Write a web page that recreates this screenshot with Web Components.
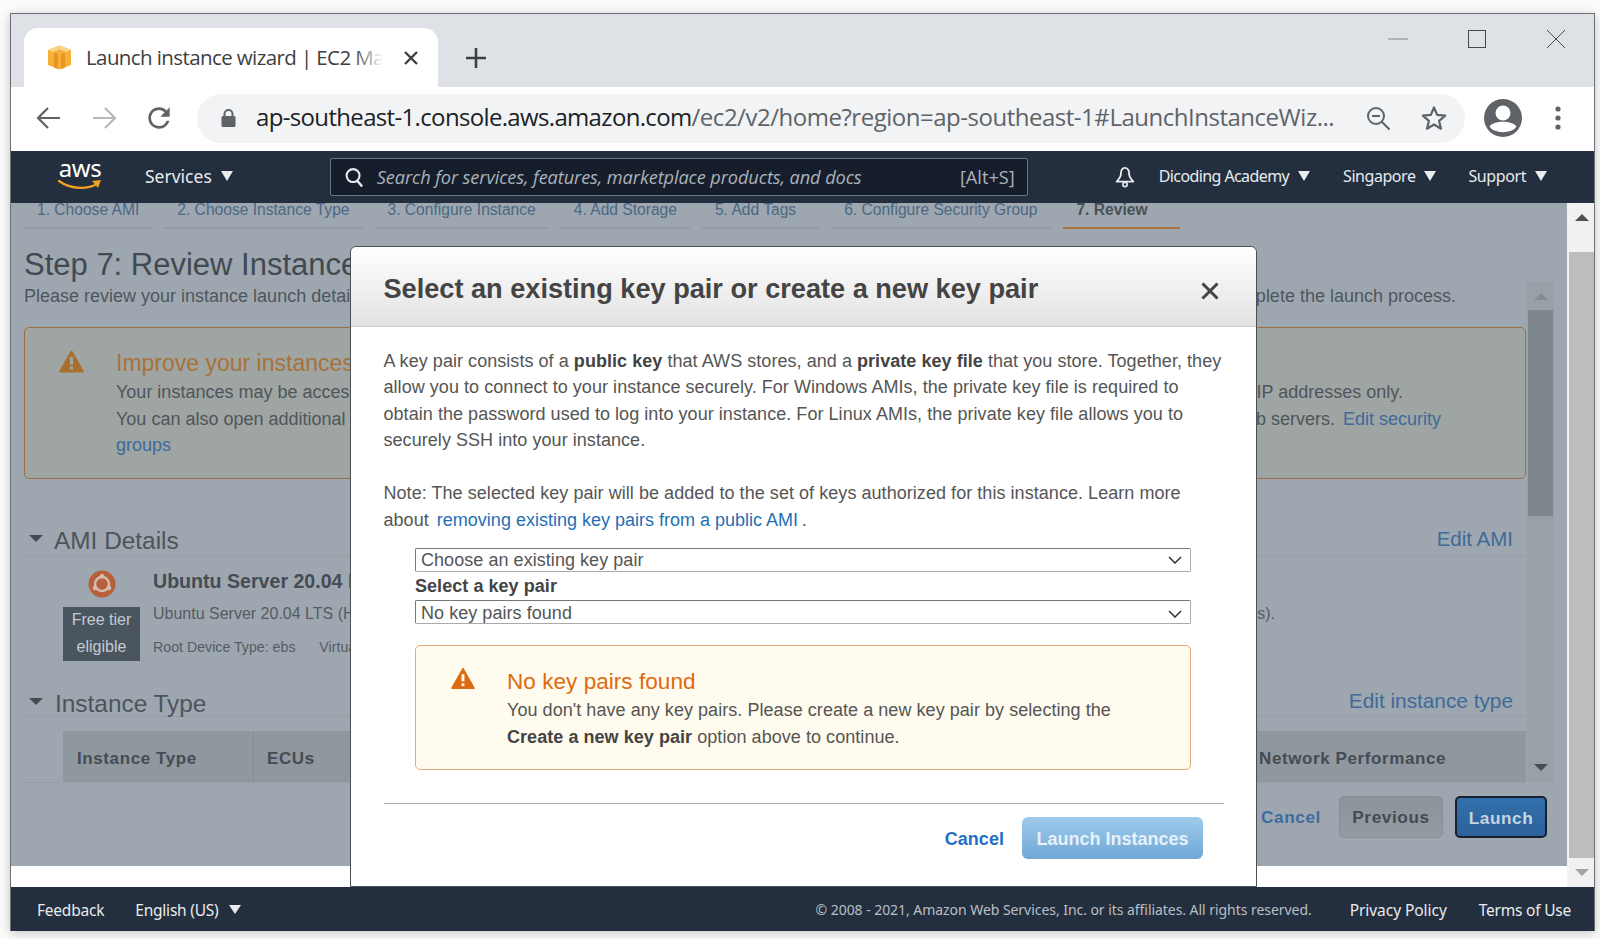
<!DOCTYPE html>
<html lang="en">
<head>
<meta charset="utf-8">
<title>Launch instance wizard</title>
<style>
html, body { margin: 0; height: 100%; background: #fbfbfb; overflow: hidden; }
body { padding: 13px 5px 0 10px; box-sizing: border-box; font-family: "Liberation Sans", Arial, sans-serif; }
</style>
</head>
<body>
<browser-window>
    <chrome-tabs></chrome-tabs>
    <chrome-toolbar></chrome-toolbar>
    <aws-nav></aws-nav>
    <console-body>
        <review-page></review-page>
        <page-scrollbar></page-scrollbar>
    </console-body>
    <aws-footer></aws-footer>
    <key-modal></key-modal>
</browser-window>

<script>
const warnIcon = (w, h, fill, mark) => `
    <svg width="${w}" height="${h}" viewBox="0 0 25 23">
        <path d="M12.5 1.5 L23.8 21.5 H1.2 Z" fill="${fill}" stroke="${fill}" stroke-width="2" stroke-linejoin="round"/>
        <rect x="11" y="7" width="3" height="7.5" fill="${mark}"/>
        <rect x="11" y="16.5" width="3" height="3" fill="${mark}"/>
    </svg>`;

// left and right pieces of a line that runs behind the modal
const clipCss = `
    .split { display: flex; justify-content: space-between; white-space: nowrap; }
    .lclip { display: block; overflow: hidden; white-space: nowrap; flex: none; }
    .rclip { display: flex; justify-content: flex-end; overflow: hidden; white-space: pre; flex: none; }
    .rclip > span { flex: none; }
`;

function define(name, html) {
    const template = document.createElement('template');
    template.innerHTML = html;
    customElements.define(name, class extends HTMLElement {
        constructor() {
            super();
            this.attachShadow({ mode: 'open' });
            this.shadowRoot.appendChild(template.content.cloneNode(true));
        }
    });
}

define('browser-window', `
    <style>
    :host {
        display: flex;
        flex-direction: column;
        position: relative;
        width: 1585px;
        height: 918px;
        box-sizing: border-box;
        border: 1px solid #6d7175;
        border-bottom: 0;
        box-shadow: 0 2px 10px rgba(0,0,0,.22);
    }
    </style>
    <slot></slot>
`);

define('chrome-tabs', `
    <style>
    :host {
        display: flex;
        align-items: flex-end;
        height: 73px;
        flex: none;
        background: #dee1e6;
        padding-left: 13px;
        font-family: "Open Sans", sans-serif;
    }
    .tab {
        position: relative;
        display: flex;
        align-items: center;
        width: 414px;
        height: 59px;
        box-sizing: border-box;
        padding: 0 0 0 23px;
        background: #fff;
        border-radius: 14px 14px 0 0;
    }
    .tab::after {
        content: "";
        position: absolute;
        right: 55px;
        top: 10px;
        width: 30px;
        height: 40px;
        background: linear-gradient(to right, rgba(255,255,255,0), #fff);
    }
    .title {
        width: 297px;
        margin: 0 0 2px 14px;
        font-size: 20.5px;
        letter-spacing: -0.6px;
        color: #3c4043;
        white-space: nowrap;
        overflow: hidden;
    }
    .close { margin-left: 21px; }
    .plus { margin: 0 0 18px 27px; }
    .controls { display: flex; align-items: center; margin: 0 28px 38px auto; gap: 59px; }
    </style>
    <div class="tab">
        <svg width="25" height="25" viewBox="0 0 25 25">
            <path d="M12.5 0.5 L24 5 V20 L12.5 24.5 L1 20 V5 Z" fill="#f4b03a"/>
            <path d="M12.5 0.5 L24 5 L19 7 L12.5 4.5 L6 7 L1 5 Z" fill="#fbd27d"/>
            <path d="M7 7.5 L11 9 V24 L7 22.5 Z M14 9 L18 7.5 V22.5 L14 24 Z" fill="#e8961f"/>
        </svg>
        <span class="title">Launch instance wizard | EC2 Management Console</span>
        <svg class="close" width="14" height="14" viewBox="0 0 14 14">
            <path d="M1 1 L13 13 M13 1 L1 13" stroke="#3c4043" stroke-width="2.4"/>
        </svg>
    </div>
    <svg class="plus" width="22" height="22" viewBox="0 0 22 22">
        <path d="M11 1 V21 M1 11 H21" stroke="#3c4043" stroke-width="2.6"/>
    </svg>
    <div class="controls">
        <svg width="20" height="20" viewBox="0 0 20 20"><path d="M0 10 H20" stroke="#85888c" stroke-width="1"/></svg>
        <svg width="20" height="20" viewBox="0 0 20 20"><rect x="1.5" y="1.5" width="17" height="17" fill="none" stroke="#45484c" stroke-width="1"/></svg>
        <svg width="20" height="20" viewBox="0 0 20 20"><path d="M1 1 L19 19 M19 1 L1 19" stroke="#45484c" stroke-width="1"/></svg>
    </div>
`);

define('chrome-toolbar', `
    <style>
    :host {
        display: flex;
        align-items: center;
        height: 64px;
        box-sizing: border-box;
        padding: 0 0 2px 25px;
        flex: none;
        background: #fff;
        font-family: "Open Sans", sans-serif;
    }
    svg { flex: none; }
    .back { margin-right: 33px; }
    .forward { margin-right: 26px; }
    .omni {
        display: flex;
        align-items: center;
        width: 1268px;
        height: 49px;
        margin-left: 22px;
        padding-left: 24px;
        box-sizing: border-box;
        background: #f1f3f4;
        border-radius: 25px;
    }
    .url {
        width: 1082px;
        margin: 0 0 3px 20px;
        font-size: 24px;
        letter-spacing: -0.48px;
        color: #5f6368;
        white-space: nowrap;
    }
    .url b { font-weight: 400; letter-spacing: -0.66px; color: #202124; }
    .zoom { margin-left: 28px; }
    .star { margin-left: 30px; }
    .avatar { margin-left: 19px; }
    .dots { margin-left: 33px; }
    </style>
    <svg class="back" width="24" height="24" viewBox="0 0 24 24"><path d="M24 12 H2 M12 2 L2 12 L12 22" fill="none" stroke="#5f6368" stroke-width="2.2"/></svg>
    <svg class="forward" width="24" height="24" viewBox="0 0 24 24"><path d="M0 12 H22 M12 2 L22 12 L12 22" fill="none" stroke="#b5b8bc" stroke-width="2.2"/></svg>
    <svg width="32" height="32" viewBox="0 0 24 24"><path fill="#5f6368" d="M17.65 6.35A7.95 7.95 0 0 0 12 4c-4.42 0-7.99 3.58-7.99 8s3.57 8 7.99 8c3.73 0 6.84-2.55 7.73-6h-2.08A5.99 5.99 0 0 1 12 18c-3.31 0-6-2.69-6-6s2.69-6 6-6c1.66 0 3.14.69 4.22 1.78L13 11h7V4l-2.35 2.35z"/></svg>
    <div class="omni">
        <svg width="15" height="20" viewBox="0 0 15 20">
            <path d="M3.5 8 V6 a4 4 0 0 1 8 0 V8" fill="none" stroke="#5f6368" stroke-width="2"/>
            <rect x="0.5" y="8" width="14" height="11" rx="1.5" fill="#5f6368"/>
        </svg>
        <div class="url"><b>ap-southeast-1.console.aws.amazon.com</b>/ec2/v2/home?region=ap-southeast-1#LaunchInstanceWiz...</div>
        <svg class="zoom" width="25" height="25" viewBox="0 0 25 25">
            <circle cx="10" cy="10" r="8" fill="none" stroke="#5f6368" stroke-width="2"/>
            <path d="M6 10 H14 M16 16 L23.5 23.5" stroke="#5f6368" stroke-width="2"/>
        </svg>
        <svg class="star" width="26" height="26" viewBox="0 0 26 26">
            <path d="M13 2.5 L16.2 9.9 L24.2 10.6 L18.1 15.9 L20 23.7 L13 19.5 L6 23.7 L7.9 15.9 L1.8 10.6 L9.8 9.9 Z" fill="none" stroke="#5f6368" stroke-width="2.2" stroke-linejoin="round"/>
        </svg>
    </div>
    <svg class="avatar" width="38" height="38" viewBox="0 0 38 38">
        <circle cx="19" cy="19" r="19" fill="#5f6368"/>
        <circle cx="19" cy="14" r="7.5" fill="#fff"/>
        <path d="M5.5 27.5 C9 21 29 21 32.5 27.5 C28 35 10 35 5.5 27.5 Z" fill="#fff"/>
    </svg>
    <svg class="dots" width="6" height="24" viewBox="0 0 6 24">
        <circle cx="3" cy="3" r="2.6" fill="#5f6368"/><circle cx="3" cy="12" r="2.6" fill="#5f6368"/><circle cx="3" cy="21" r="2.6" fill="#5f6368"/>
    </svg>
`);

define('aws-nav', `
    <style>
    :host {
        display: flex;
        align-items: center;
        height: 52px;
        flex: none;
        background: #232f3e;
        padding-left: 47px;
        font-family: "Noto Sans", sans-serif;
        font-size: 16px;
        color: #e9ebed;
    }
    .logo { position: relative; width: 44px; height: 40px; }
    .logo span {
        display: block;
        font-size: 24px;
        line-height: 22px;
        text-align: center;
        color: #fff;
        letter-spacing: -0.5px;
    }
    .logo svg { display: block; margin-top: -1px; }
    .item { display: flex; align-items: center; white-space: nowrap; padding-bottom: 2px; }
    .tri { width: 0; height: 0; border: 6.5px solid transparent; border-top: 10px solid #e9ebed; border-bottom: 0; margin-left: 9px; }
    .services { margin-left: 43px; font-size: 17.5px; }
    .search {
        display: flex;
        align-items: center;
        width: 698px;
        height: 38px;
        box-sizing: border-box;
        margin-left: 97px;
        padding: 0 12px 0 14px;
        background: #161e2c;
        border: 1px solid #6c7781;
        border-radius: 2px;
        color: #aab2ba;
        font-size: 18.2px;
        font-family: "Open Sans", sans-serif;
    }
    .search i { margin-left: 13px; white-space: nowrap; letter-spacing: -0.1px; }
    .search span { margin-left: auto; }
    .bell { margin-left: 87px; }
    .acct { margin-left: 24px; letter-spacing: -0.6px; }
    .region { margin-left: 33px; letter-spacing: -0.45px; }
    .support { margin-left: 32px; letter-spacing: -0.4px; }
    </style>
    <div class="logo">
        <span>aws</span>
        <svg width="44" height="14" viewBox="0 0 44 14">
            <path d="M1 3 C12 11 28 12 39 6" fill="none" stroke="#f0a020" stroke-width="2.4" stroke-linecap="round"/>
            <path d="M34 3 L43 2 L40 10 Z" fill="#f0a020"/>
        </svg>
    </div>
    <div class="item services">Services<span class="tri"></span></div>
    <div class="search">
        <svg width="19" height="21" viewBox="0 0 20 22">
            <circle cx="8.5" cy="9" r="6.8" fill="none" stroke="#e9ebed" stroke-width="2.2"/>
            <path d="M13 14.5 L18 20.5" stroke="#e9ebed" stroke-width="2.6"/>
        </svg>
        <i>Search for services, features, marketplace products, and docs</i>
        <span>[Alt+S]</span>
    </div>
    <svg class="bell" width="20" height="24" viewBox="0 0 24 26">
        <path d="M12 2 C8 2 7 6 7 10 C7 13 5 15 2 18.5 H22 C19 15 17 13 17 10 C17 6 16 2 12 2 Z" fill="none" stroke="#e9ebed" stroke-width="2.2" stroke-linejoin="round"/>
        <circle cx="12" cy="22" r="2.6" fill="none" stroke="#e9ebed" stroke-width="2"/>
    </svg>
    <div class="item acct">Dicoding Academy<span class="tri"></span></div>
    <div class="item region">Singapore<span class="tri"></span></div>
    <div class="item support">Support<span class="tri"></span></div>
`);

define('console-body', `
    <style>
    :host { display: flex; flex: 1; min-height: 0; background: #fff; }
    </style>
    <slot></slot>
`);

define('wizard-steps', `
    <style>
    :host {
        display: flex;
        gap: 12px;
        height: 26px;
        font-size: 15.6px;
        color: #4b6785;
    }
    span {
        padding: 0 13px;
        line-height: 13px;
        border-bottom: 2px solid #949ca4;
        white-space: nowrap;
    }
    .five { padding-right: 23px; }
    .six { padding-right: 14px; }
    .on { color: #4a5058; font-weight: 700; border-bottom-color: #a8763a; padding-right: 32px; }
    </style>
    <span>1. Choose AMI</span>
    <span>2. Choose Instance Type</span>
    <span>3. Configure Instance</span>
    <span>4. Add Storage</span>
    <span class="five">5. Add Tags</span>
    <span class="six">6. Configure Security Group</span>
    <span class="on">7. Review</span>
`);

define('warn-box', `
    <style>
    ${clipCss}
    :host {
        display: flex;
        box-sizing: border-box;
        height: 152px;
        margin-top: 19px;
        padding: 20px 0 0 34px;
        background: #9fa5a3;
        border: 1px solid #9b6f42;
        border-radius: 5px;
        color: #4f555b;
    }
    .icon { flex: none; width: 57px; padding-top: 2px; }
    .text { flex: 1; min-width: 0; line-height: 26.5px; }
    h2 { margin: 0 0 1px; width: 234px; overflow: hidden; font-size: 23px; font-weight: 400; line-height: 30px; color: #a8723a; white-space: nowrap; }
    .lclip { width: 234px; }
    a { color: #3e6a9c; }
    .gap { margin-left: 3px; }
    </style>
    <div class="icon">${warnIcon(25, 23, '#a8702f', '#a0a6a4')}</div>
    <div class="text">
        <h2>Improve your instances'</h2>
        <div class="split" style="padding-right:122px"><span class="lclip">Your instances may be accessible</span><span class="rclip" style="width:147px"><span>known IP addresses only.</span></span></div>
        <div class="split" style="padding-right:84px"><span class="lclip">You can also open additional ports</span><span class="rclip" style="width:185px"><span>for web servers. <a class="gap">Edit security</a></span></span></div>
        <div><a>groups</a></div>
    </div>
`);

define('section-head', `
    <style>
    :host {
        display: flex;
        align-items: center;
        height: 36px;
        box-sizing: border-box;
        padding-top: var(--drop, 2px);
        border-bottom: 1px solid #959da5;
        color: #4d545b;
        padding-right: 13px;
    }
    .tri { width: 0; height: 0; border: 7px solid transparent; border-top: 7px solid #444b52; border-bottom: 0; margin: 0 11px 0 5px; }
    h3 { margin: 0; padding-top: var(--title-drop, 4px); font-size: 24.4px; font-weight: 400; white-space: nowrap; }
    ::slotted(a) { margin-left: auto; font-size: var(--link-size, 20.5px); color: #3f6a99; white-space: nowrap; }
    </style>
    <span class="tri"></span>
    <h3><slot name="title"></slot></h3>
    <slot></slot>
`);

define('ami-row', `
    <style>
    ${clipCss}
    :host { display: flex; height: 125px; padding: 14px 0 0 39px; box-sizing: border-box; color: #555c63; }
    .left { flex: none; width: 77px; margin-right: 13px; text-align: center; }
    .left svg { display: block; margin: 0 auto 9px; }
    .free {
        background: #4b555f;
        color: #c3cbd2;
        font-size: 16px;
        line-height: 26.5px;
        height: 54px;
    }
    .info { flex: 1; min-width: 0; }
    .name { width: 198px; overflow: hidden; margin-top: -2px; font-size: 19.6px; font-weight: 700; line-height: 26px; color: #454c54; white-space: nowrap; }
    .split { font-size: 16px; line-height: 26px; margin-top: 7px; padding-right: 251px; }
    .lclip { width: 198px; }
    .meta { width: 198px; overflow: hidden; font-size: 14.2px; line-height: 26px; margin-top: 7px; white-space: nowrap; }
    .meta span { margin-left: 16px; }
    </style>
    <div class="left">
        <svg width="28" height="28" viewBox="0 0 28 28">
            <circle cx="14" cy="14" r="13.5" fill="#b8603c"/>
            <circle cx="14" cy="14" r="7" fill="none" stroke="#d3bdb2" stroke-width="2.4"/>
            <circle cx="14" cy="6" r="2.2" fill="#d3bdb2"/><circle cx="7" cy="18" r="2.2" fill="#d3bdb2"/><circle cx="21" cy="18" r="2.2" fill="#d3bdb2"/>
        </svg>
        <div class="free">Free tier<br>eligible</div>
    </div>
    <div class="info">
        <div class="name">Ubuntu Server 20.04 LTS</div>
        <div class="split"><span class="lclip">Ubuntu Server 20.04 LTS (HVM)</span><span class="rclip" style="width:19px"><span>s).</span></span></div>
        <div class="meta">Root Device Type: ebs<span>&nbsp;&nbsp;Virtualization type</span></div>
    </div>
`);

define('table-head', `
    <style>
    :host {
        display: block;
        margin-top: 14px;
        padding-left: 39px;
        border-bottom: 1px solid #959da5;
    }
    .row {
        display: flex;
        height: 51px;
        background: #8f979f;
        color: #454c53;
        font-size: 17px;
        font-weight: 700;
        letter-spacing: .6px;
        line-height: 55px;
        white-space: nowrap;
    }
    .a { width: 191px; box-sizing: border-box; padding-left: 14px; border-right: 1px solid #858d95; }
    .b { padding-left: 13px; }
    .c { margin-left: auto; width: 267px; }
    </style>
    <div class="row">
        <div class="a">Instance Type</div>
        <div class="b">ECUs</div>
        <div class="c">Network Performance</div>
    </div>
`);

define('inner-scrollbar', `
    <style>
    :host {
        display: flex;
        flex-direction: column;
        align-items: center;
        flex: none;
        width: 27px;
        margin-left: 1px;
        background: #99a1a8;
    }
    .up { height: 28px; display: flex; align-items: center; }
    .thumb { width: 25px; height: 206px; background: #7f878e; }
    .down { margin-top: auto; height: 30px; display: flex; align-items: center; }
    .u { width: 0; height: 0; border: 7px solid transparent; border-bottom: 7px solid #848c94; border-top: 0; }
    .d { width: 0; height: 0; border: 7px solid transparent; border-top: 7px solid #474e55; border-bottom: 0; }
    </style>
    <div class="up"><span class="u"></span></div>
    <div class="thumb"></div>
    <div class="down"><span class="d"></span></div>
`);

define('dim-buttons', `
    <style>
    :host {
        display: flex;
        align-items: center;
        justify-content: flex-end;
        margin-top: 14px;
        padding-right: 20px;
        height: 42px;
        font-size: 17.2px;
        font-weight: 700;
        letter-spacing: .6px;
    }
    a { color: #3e6c9f; margin-right: 18px; }
    div { box-sizing: border-box; height: 42px; line-height: 40px; text-align: center; border-radius: 5px; }
    .prev { width: 104px; margin-right: 12px; background: linear-gradient(#8b939b, #949ca3); border: 1px solid #878f96; color: #444b53; }
    .launch { width: 92px; background: linear-gradient(#3270ad, #2d6199); border: 2px solid #17212d; color: #c5d4e2; }
    </style>
    <a>Cancel</a>
    <div class="prev">Previous</div>
    <div class="launch">Launch</div>
`);

define('review-page', `
    <style>
    ${clipCss}
    :host {
        display: flex;
        flex-direction: column;
        flex: none;
        width: 1556px;
        height: 663px;
        box-sizing: border-box;
        padding-left: 13px;
        background: #9ea7af;
        color: #4f565d;
        font-size: 18px;
        overflow: hidden;
    }
    h1 {
        margin: 0;
        width: 326px;
        overflow: hidden;
        padding-top: 18px;
        font-size: 31px;
        font-weight: 400;
        line-height: 35px;
        color: #414a52;
        white-space: nowrap;
    }
    .scroller { display: flex; height: 500px; flex: none; }
    .content { width: 1502px; flex: none; }
    .sub { height: 26px; line-height: 28px; padding-right: 70px; }
    .sub .lclip { width: 326px; height: 28px; }
    </style>
    <wizard-steps></wizard-steps>
    <h1>Step 7: Review Instance</h1>
    <div class="scroller">
        <div class="content">
            <div class="split sub"><span class="lclip">Please review your instance launch details.</span><span class="rclip" style="width:200px"><span>complete the launch process.</span></span></div>
            <warn-box></warn-box>
            <section-head style="margin-top:41px"><span slot="title">AMI Details</span><a>Edit AMI</a></section-head>
            <ami-row></ami-row>
            <section-head style="--drop:5px;--title-drop:6px;--link-size:20.8px"><span slot="title" style="margin-left:1px">Instance Type</span><a>Edit instance type</a></section-head>
            <table-head></table-head>
        </div>
        <inner-scrollbar></inner-scrollbar>
    </div>
    <dim-buttons></dim-buttons>
`);

define('page-scrollbar', `
    <style>
    :host {
        display: flex;
        flex-direction: column;
        flex: 1;
        align-items: stretch;
        border-left: 2px solid #f4f4f4;
        background: #f1f1f1;
    }
    .up, .down { display: flex; align-items: center; justify-content: center; flex: none; }
    .up { height: 49px; padding-bottom: 20px; box-sizing: border-box; }
    .thumb { flex: 1; background: #bdbdbd; }
    .down { height: 29px; }
    .u { width: 0; height: 0; border: 7px solid transparent; border-bottom: 7px solid #505050; border-top: 0; }
    .d { width: 0; height: 0; border: 7px solid transparent; border-top: 7px solid #a3a3a3; border-bottom: 0; }
    </style>
    <div class="up"><span class="u"></span></div>
    <div class="thumb"></div>
    <div class="down"><span class="d"></span></div>
`);

define('aws-footer', `
    <style>
    :host {
        display: flex;
        align-items: center;
        height: 44px;
        box-sizing: border-box;
        flex: none;
        background: #232f3e;
        padding: 1px 23px 0 26px;
        font-family: "Noto Sans", sans-serif;
        font-size: 15.5px;
        letter-spacing: -0.22px;
        color: #e9ebed;
        white-space: nowrap;
    }
    .lang { display: flex; align-items: center; margin-left: 31px; }
    .tri { width: 0; height: 0; border: 6px solid transparent; border-top: 9px solid #e9ebed; border-bottom: 0; margin-left: 10px; }
    .copy { margin-left: auto; font-size: 14px; letter-spacing: -0.05px; color: #b9bfc5; }
    .privacy { margin-left: 38px; letter-spacing: -0.05px; }
    .terms { margin-left: 32px; }
    </style>
    <span>Feedback</span>
    <span class="lang">English (US)<span class="tri"></span></span>
    <span class="copy">© 2008 - 2021, Amazon Web Services, Inc. or its affiliates. All rights reserved.</span>
    <span class="privacy">Privacy Policy</span>
    <span class="terms">Terms of Use</span>
`);

define('key-select', `
    <style>
    :host {
        display: flex;
        align-items: center;
        justify-content: space-between;
        height: 24px;
        box-sizing: border-box;
        padding: var(--text-drop, 0) 8px 0 5px;
        border: 1px solid #777;
        border-bottom-color: #aaa;
        border-right-color: #aaa;
        border-radius: 2px;
        background: #fff;
        color: #555;
    }
    </style>
    <span><slot></slot></span>
    <svg width="14" height="8" viewBox="0 0 14 8"><path d="M1 1 L7 7 L13 1" fill="none" stroke="#333" stroke-width="1.5"/></svg>
`);

define('key-modal', `
    <style>
    :host {
        position: absolute;
        left: 339px;
        top: 232px;
        display: flex;
        flex-direction: column;
        box-sizing: border-box;
        width: 907px;
        height: 641px;
        background: #fff;
        border: 1px solid #4a4f54;
        border-radius: 6px 6px 0 0;
        font-size: 18px;
        line-height: 26.5px;
        letter-spacing: .05px;
        color: #555;
    }
    header {
        display: flex;
        align-items: center;
        justify-content: space-between;
        flex: none;
        height: 80px;
        box-sizing: border-box;
        padding: 5px 37px 0 32.5px;
        background: linear-gradient(#fff, #e2e2e2);
        border-bottom: 1px solid #ccc;
        border-radius: 6px 6px 0 0;
    }
    header svg { margin-top: 4px; }
    h1 { margin: 0; font-size: 27.15px; letter-spacing: 0; color: #444; white-space: nowrap; }
    .body { padding: 20.5px 32px 0 32.5px; }
    p { margin: 0 0 26.5px; }
    .line { display: block; white-space: nowrap; }
    b { color: #444; }
    a { color: #1f6fb5; letter-spacing: 0; }
    .gap { margin-left: 3px; }
    .fields { margin: 0 33px 0 31.5px; }
    .fields label { display: block; font-weight: 700; color: #444; height: 28px; line-height: 29px; }
    .alert {
        display: flex;
        margin-top: 21px;
        height: 125px;
        box-sizing: border-box;
        padding: 20.5px 0 0 35px;
        background: #fffbee;
        border: 1px solid #e8a877;
        border-radius: 5px;
    }
    .alert .icon { flex: none; width: 56px; }
    .alert h2 { margin: 0 0 1.5px; font-size: 22.5px; font-weight: 400; line-height: 29px; color: #dd6b10; }
    .actions {
        display: flex;
        align-items: center;
        justify-content: flex-end;
        margin-top: 33px;
        padding: 13px 21px 0 0;
        border-top: 1px solid #aaa;
        font-weight: 700;
        letter-spacing: 0;
    }
    .actions a { color: #1f6fc5; margin: 2px 18px 0 0; letter-spacing: .05px; }
    .go {
        width: 181px;
        height: 42px;
        line-height: 44px;
        text-align: center;
        border-radius: 6px;
        background: linear-gradient(#a0cbec, #6fa7d5);
        color: #e6f1fa;
    }
    </style>
    <header>
        <h1>Select an existing key pair or create a new key pair</h1>
        <svg width="18" height="18" viewBox="0 0 18 18"><path d="M1.5 1.5 L16.5 16.5 M16.5 1.5 L1.5 16.5" stroke="#444" stroke-width="3"/></svg>
    </header>
    <div class="body">
        <p>
            <span class="line">A key pair consists of a <b>public key</b> that AWS stores, and a <b>private key file</b> that you store. Together, they</span>
            <span class="line">allow you to connect to your instance securely. For Windows AMIs, the private key file is required to</span>
            <span class="line">obtain the password used to log into your instance. For Linux AMIs, the private key file allows you to</span>
            <span class="line">securely SSH into your instance.</span>
        </p>
        <p style="margin-bottom:15px">
            <span class="line">Note: The selected key pair will be added to the set of keys authorized for this instance. Learn more</span>
            <span class="line">about <a class="gap">removing existing key pairs from a public AMI</a>&thinsp;.</span>
        </p>
        <div class="fields">
            <key-select>Choose an existing key pair</key-select>
            <label>Select a key pair</label>
            <key-select style="--text-drop:3px">No key pairs found</key-select>
            <div class="alert">
                <div class="icon">${warnIcon(24, 23, '#dd6b10', '#fffbee')}</div>
                <div>
                    <h2>No key pairs found</h2>
                    <div>You don't have any key pairs. Please create a new key pair by selecting the</div>
                    <div><b>Create a new key pair</b> option above to continue.</div>
                </div>
            </div>
        </div>
        <div class="actions"><a>Cancel</a><div class="go">Launch Instances</div></div>
    </div>
`);
</script>
</body>
</html>
